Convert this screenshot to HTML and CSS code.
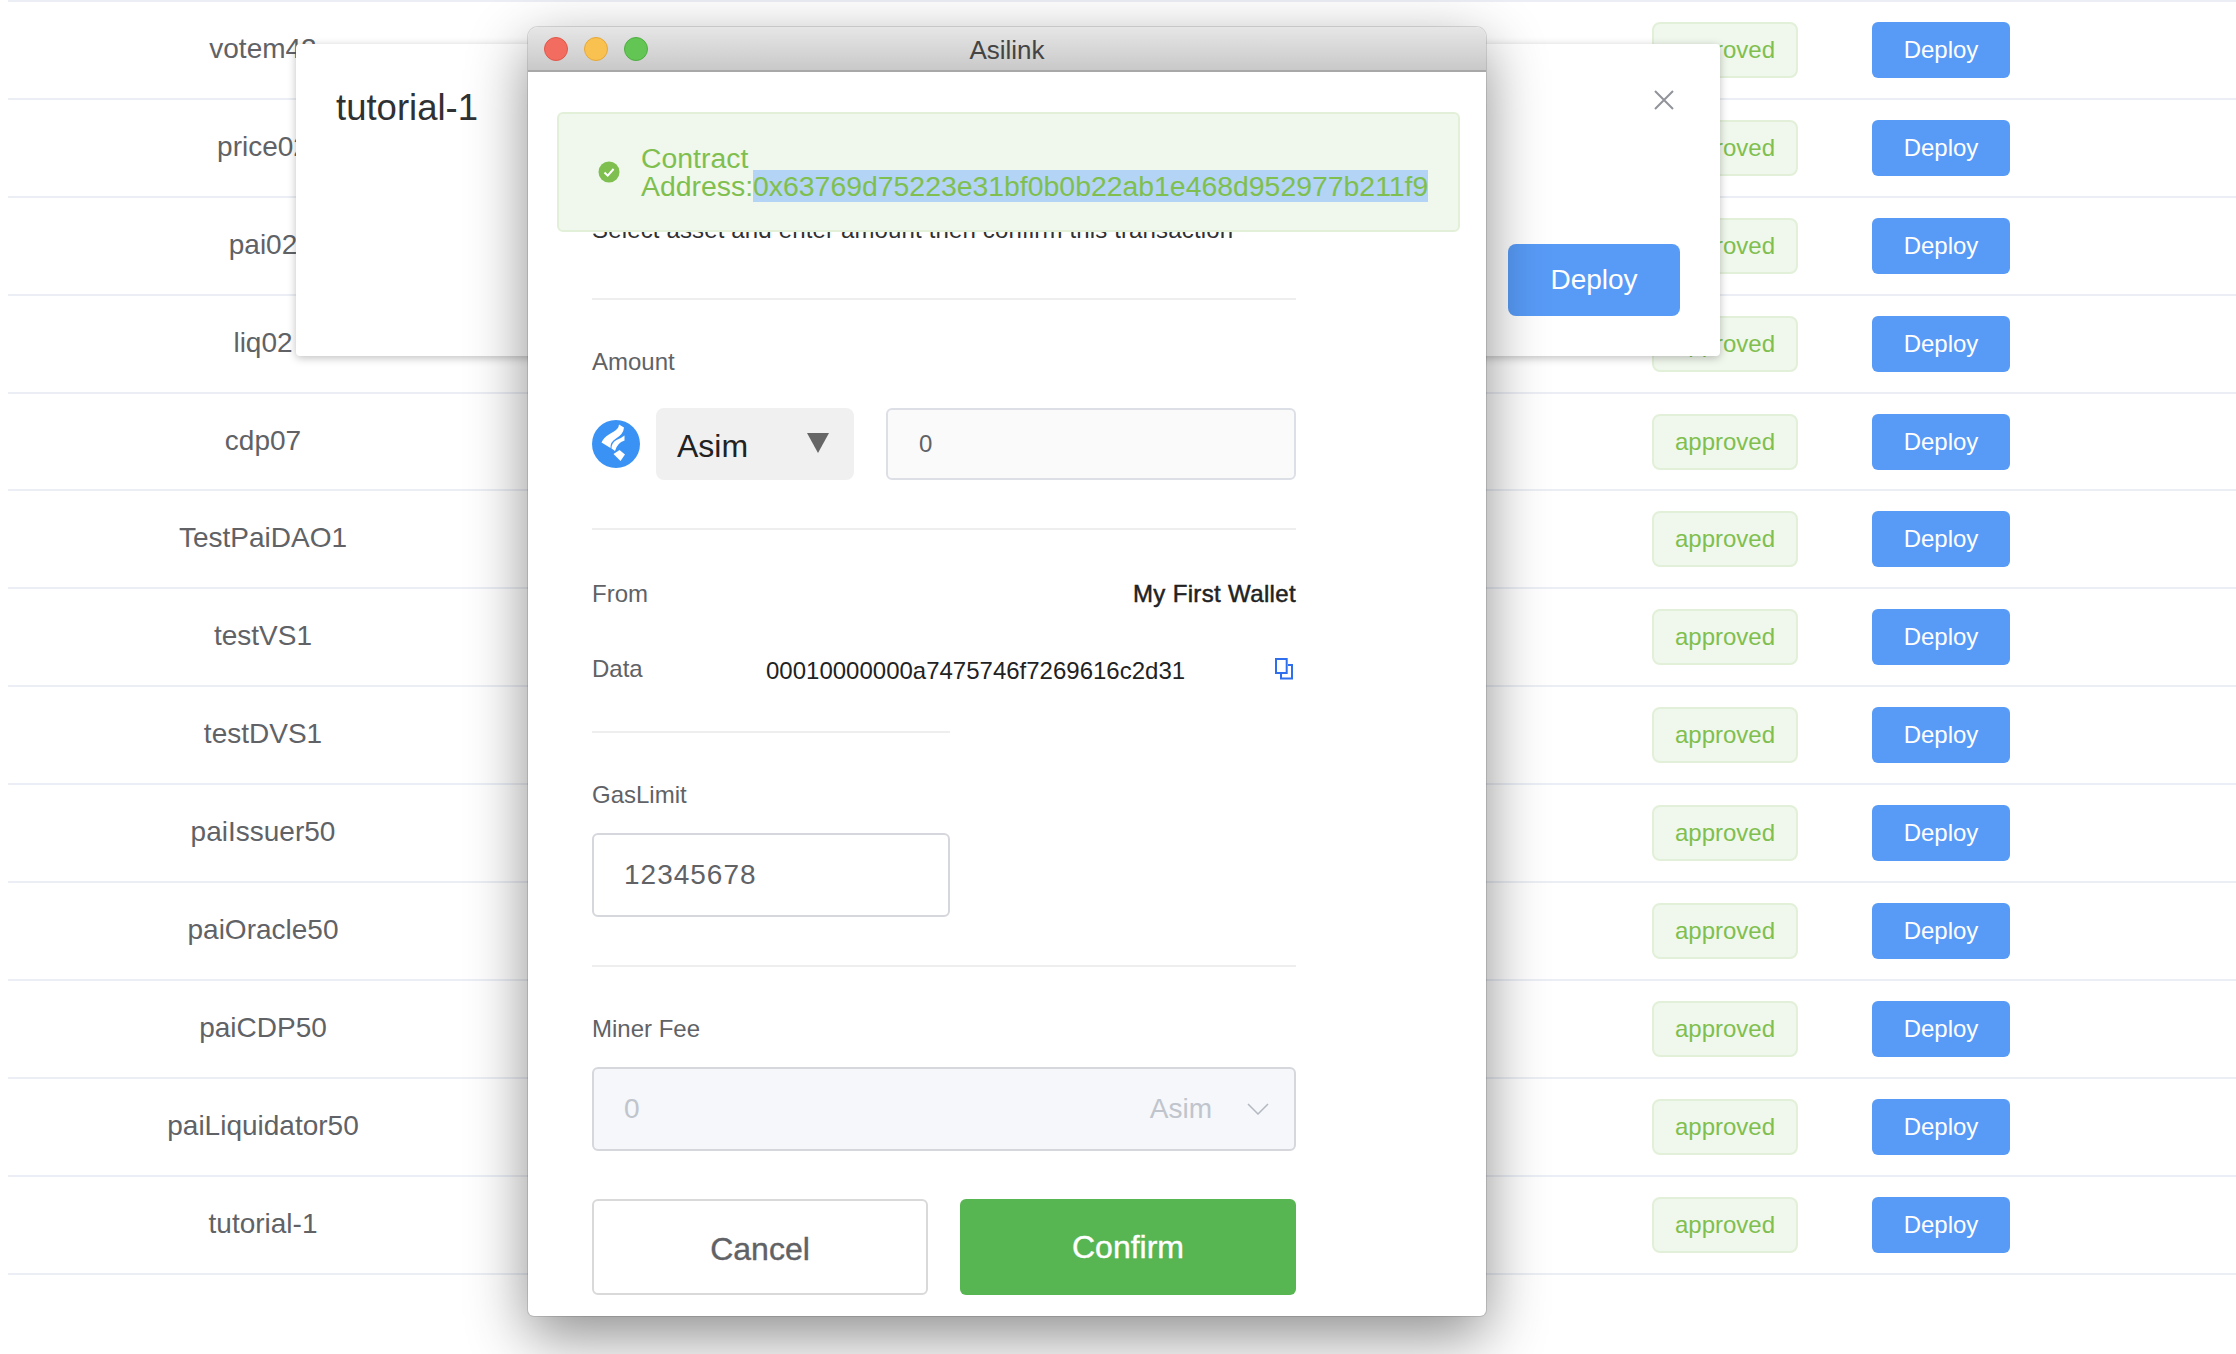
FILE: index.html
```html
<!DOCTYPE html>
<html lang="en">
<head>
    <meta charset="UTF-8">
    <title>Asilink</title>
    <link rel="stylesheet" href="styles.css">
</head>
<body>
    <div class="list">
        <div class="row"><div class="name">votem42</div><div class="tag">approved</div><button class="btn-deploy">Deploy</button></div>
        <div class="row"><div class="name">price02</div><div class="tag">approved</div><button class="btn-deploy">Deploy</button></div>
        <div class="row"><div class="name">pai02</div><div class="tag">approved</div><button class="btn-deploy">Deploy</button></div>
        <div class="row"><div class="name">liq02</div><div class="tag">approved</div><button class="btn-deploy">Deploy</button></div>
        <div class="row"><div class="name">cdp07</div><div class="tag">approved</div><button class="btn-deploy">Deploy</button></div>
        <div class="row"><div class="name">TestPaiDAO1</div><div class="tag">approved</div><button class="btn-deploy">Deploy</button></div>
        <div class="row"><div class="name">testVS1</div><div class="tag">approved</div><button class="btn-deploy">Deploy</button></div>
        <div class="row"><div class="name">testDVS1</div><div class="tag">approved</div><button class="btn-deploy">Deploy</button></div>
        <div class="row"><div class="name">paiIssuer50</div><div class="tag">approved</div><button class="btn-deploy">Deploy</button></div>
        <div class="row"><div class="name">paiOracle50</div><div class="tag">approved</div><button class="btn-deploy">Deploy</button></div>
        <div class="row"><div class="name">paiCDP50</div><div class="tag">approved</div><button class="btn-deploy">Deploy</button></div>
        <div class="row"><div class="name">paiLiquidator50</div><div class="tag">approved</div><button class="btn-deploy">Deploy</button></div>
        <div class="row"><div class="name">tutorial-1</div><div class="tag">approved</div><button class="btn-deploy">Deploy</button></div>
    </div>

    <div class="dialog">
        <div class="dialog-head">
            <div class="dialog-title">tutorial-1</div>
            <svg class="dialog-close" viewBox="0 0 20 20" width="20" height="20"><path d="M1 1 19 19M19 1 1 19" fill="none" stroke="#909399" stroke-width="2"/></svg>
        </div>
        <button class="btn-dialog">Deploy</button>
    </div>

    <div class="window">
        <div class="titlebar">
            <div class="dots">
                <span class="dot dot-red"></span>
                <span class="dot dot-yellow"></span>
                <span class="dot dot-green"></span>
            </div>
            <div class="window-title">Asilink</div>
        </div>

        <div class="alert">
            <svg class="alert-icon" viewBox="0 0 22 22" width="22" height="22">
                <circle cx="11" cy="11" r="10.5" fill="#7fbf4f"/>
                <path d="M6.5 11.5 9.7 14.6 15.6 8" fill="none" stroke="#fff" stroke-width="2"/>
            </svg>
            <div class="alert-text">Contract Address:<span class="hash">0x63769d75223e31bf0b0b22ab1e468d952977b211f9</span></div>
        </div>

        <div class="form">
            <div class="note">Select asset and enter amount then confirm this transaction</div>
            <div class="line line-note"></div>

            <div class="label label-amount">Amount</div>
            <div class="amount">
                <svg class="coin" viewBox="0 0 48 48" width="48" height="48">
                    <circle cx="24" cy="24" r="24" fill="#3a93f4"/>
                    <path fill="#fff" d="M27 4.5 32 7.5Q31.5 14 24 18.5 18 22 18.5 28L9.5 22.5Q11.5 17.5 18.5 13.5 27 9.5 27 4.5Z"/>
                    <path fill="#fff" d="M32.5 15.5V20.5Q25 23 23 31L19.5 28.5Q19.5 22.5 24.5 20 29.5 18 32.5 15.5Z"/>
                    <path fill="#fff" d="M27.5 30 33 34.5 28.5 41 21.5 34Z"/>
                </svg>
                <div class="asset">
                    <span class="asset-name">Asim</span>
                    <span class="asset-arrow"></span>
                </div>
                <div class="amount-input">0</div>
            </div>
            <div class="line line-amount"></div>

            <div class="info info-from">
                <span class="label">From</span>
                <span class="wallet">My First Wallet</span>
            </div>
            <div class="info info-data">
                <span class="label">Data</span>
                <span class="data-value">00010000000a7475746f7269616c2d31</span>
                <svg class="copy" viewBox="0 0 20 22" width="20" height="22">
                    <path d="M2 1H12.7V15H2ZM14 7H18V20.5H7V16" fill="none" stroke="#2f6fed" stroke-width="2"/>
                </svg>
            </div>
            <div class="line line-short"></div>

            <div class="label label-gas">GasLimit</div>
            <div class="gas-input">12345678</div>
            <div class="line line-gas"></div>

            <div class="label label-gas">Miner Fee</div>
            <div class="fee-input">
                <span>0</span>
                <span class="fee-unit">Asim</span>
                <svg viewBox="0 0 22 12" width="22" height="12"><path d="M1 1 11 11 21 1" fill="none" stroke="#b4b8c0" stroke-width="1.5"/></svg>
            </div>

            <div class="actions">
                <button class="btn-cancel">Cancel</button>
                <button class="btn-confirm">Confirm</button>
            </div>
        </div>
    </div>
</body>
</html>
```

FILE: styles.css
```css
html, body {
    height: 100%;
    margin: 0;
    overflow: hidden;
}
body {
    font-family: "Liberation Sans", Arial, sans-serif;
    background: #fff;
    color: #606266;
}
button {
    font-family: inherit;
    cursor: pointer;
}
.list {
    margin-left: 8px;
    border-top: 2px solid #ebeef5;
}
.row {
    display: flex;
    align-items: center;
    height: 95.9px;
    padding-right: 226px;
    border-bottom: 2px solid #ebeef5;
}
.name {
    width: 510px;
    padding-bottom: 2px;
    text-align: center;
    font-size: 28px;
    color: #606266;
}
.tag {
    box-sizing: border-box;
    width: 146px;
    height: 56px;
    margin-left: auto;
    line-height: 52px;
    text-align: center;
    font-size: 24px;
    color: #7fbf4f;
    background: #f0f7ec;
    border: 2px solid #e2f0d9;
    border-radius: 8px;
}
.btn-deploy {
    width: 138px;
    height: 56px;
    margin-left: 74px;
    font-size: 24px;
    color: #fff;
    background: #589bf7;
    border: 0;
    border-radius: 6px;
}

/* modal under the wallet window */
.dialog {
    position: absolute;
    top: 44px;
    left: 296px;
    box-sizing: border-box;
    display: flex;
    flex-direction: column;
    width: 1424px;
    height: 312px;
    padding: 40px;
    background: #fff;
    border-radius: 4px;
    box-shadow: 0 2px 8px rgba(0, 0, 0, 0.25);
}
.dialog-head {
    display: flex;
    justify-content: space-between;
    align-items: flex-start;
}
.dialog-title {
    font-size: 36.5px;
    line-height: 48px;
    color: #303133;
}
.dialog-close {
    margin-top: 6px;
    margin-right: 6px;
}
.btn-dialog {
    align-self: flex-end;
    width: 172px;
    height: 72px;
    margin-top: auto;
    font-size: 28px;
    color: #fff;
    background: #589bf7;
    border: 0;
    border-radius: 8px;
}

/* wallet window */
.window {
    position: absolute;
    top: 27px;
    left: 528px;
    width: 958px;
    background: #fff;
    border-radius: 10px 10px 6px 6px;
    box-shadow: 0 0 0 1px rgba(0, 0, 0, 0.12), 0 20px 60px rgba(0, 0, 0, 0.45);
}
.titlebar {
    position: relative;
    display: flex;
    align-items: center;
    justify-content: center;
    box-sizing: border-box;
    height: 45px;
    padding-top: 3px;
    background: linear-gradient(#e6e6e6, #c9c9c9);
    border-bottom: 2px solid #a8a8a8;
    border-radius: 10px 10px 0 0;
}
.dots {
    position: absolute;
    left: 16px;
    top: 10px;
    display: flex;
    gap: 16px;
}
.dot {
    box-sizing: border-box;
    width: 24px;
    height: 24px;
    border-radius: 50%;
}
.dot-red {
    background: #f26d5f;
    border: 1px solid #e0574a;
}
.dot-yellow {
    background: #f9c14f;
    border: 1px solid #e5a83a;
}
.dot-green {
    background: #62c554;
    border: 1px solid #4fae42;
}
.window-title {
    font-size: 26px;
    color: #444;
}
.alert {
    position: absolute;
    top: 85px;
    left: 29px;
    box-sizing: border-box;
    display: flex;
    align-items: center;
    width: 903px;
    height: 120px;
    padding: 0 30px 0 39px;
    background: #f0f7ec;
    border: 2px solid #e2f0d9;
    border-radius: 6px;
}
.alert-icon {
    flex: none;
    margin-right: 21px;
}
.alert-text {
    font-size: 28.4px;
    line-height: 28px;
    color: #7fbf4f;
}
.hash {
    background: #b3d4f5;
}
.form {
    padding: 142px 190px 21px 64px;
}
.note {
    font-size: 24px;
    letter-spacing: 0.15px;
    line-height: 32px;
    color: #303133;
}
.line {
    height: 2px;
    background: #eeeeee;
}
.line-note {
    margin-top: 52px;
}
.line-amount {
    margin-top: 48px;
}
.line-short {
    width: 358px;
    margin-top: 44px;
}
.line-gas {
    margin-top: 48px;
}
.label {
    font-size: 24px;
    line-height: 32px;
    color: #606266;
}
.label-amount {
    margin-top: 46px;
}
.label-gas {
    margin-top: 46px;
}
.amount {
    display: flex;
    align-items: center;
    margin-top: 30px;
}
.coin {
    margin-right: 16px;
}
.asset {
    box-sizing: border-box;
    display: flex;
    justify-content: space-between;
    width: 198px;
    height: 72px;
    padding: 0 25px 0 21px;
    background: #f0f0f0;
    border-radius: 8px;
}
.asset-name {
    font-size: 32px;
    line-height: 76px;
    color: #222;
}
.asset-arrow {
    width: 0;
    height: 0;
    margin-top: 25px;
    border-top: 20px solid #666;
    border-left: 11px solid transparent;
    border-right: 11px solid transparent;
}
.amount-input {
    box-sizing: border-box;
    flex: 1;
    height: 72px;
    margin-left: 32px;
    padding-left: 31px;
    font-size: 24px;
    line-height: 67px;
    background: #fafafa;
    border: 2px solid #dcdfe6;
    border-radius: 6px;
}
.info {
    display: flex;
    align-items: center;
    line-height: 32px;
}
.info-from {
    justify-content: space-between;
    margin-top: 48px;
}
.info-data {
    margin-top: 41px;
}
.wallet {
    font-size: 24px;
    letter-spacing: 0.35px;
    -webkit-text-stroke: 0.5px currentColor;
    color: #222;
}
.info-data .label {
    width: 174px;
}
.data-value {
    flex: 1;
    padding-top: 4px;
    font-size: 24px;
    color: #222;
}
.copy {
    margin-right: 2px;
}
.gas-input {
    box-sizing: border-box;
    width: 358px;
    height: 84px;
    margin-top: 22px;
    padding-left: 30px;
    font-size: 28px;
    letter-spacing: 1px;
    line-height: 80px;
    border: 2px solid #d5d7dc;
    border-radius: 6px;
}
.fee-input {
    box-sizing: border-box;
    display: flex;
    align-items: center;
    height: 84px;
    margin-top: 22px;
    padding: 0 25px 0 30px;
    font-size: 28px;
    color: #c0c4cc;
    background: #f5f7fa;
    border: 2px solid #d5d7dc;
    border-radius: 6px;
}
.fee-unit {
    margin-left: auto;
    margin-right: 35px;
}
.actions {
    display: flex;
    justify-content: space-between;
    margin-top: 48px;
}
.btn-cancel, .btn-confirm {
    box-sizing: border-box;
    height: 96px;
    font-size: 32px;
    border-radius: 6px;
    -webkit-text-stroke: 0.4px currentColor;
}
.btn-cancel {
    width: 336px;
    padding-top: 6px;
    color: #606266;
    background: #fff;
    border: 2px solid #d9d9d9;
}
.btn-confirm {
    width: 336px;
    color: #fff;
    background: #58b652;
    border: 0;
}
```
